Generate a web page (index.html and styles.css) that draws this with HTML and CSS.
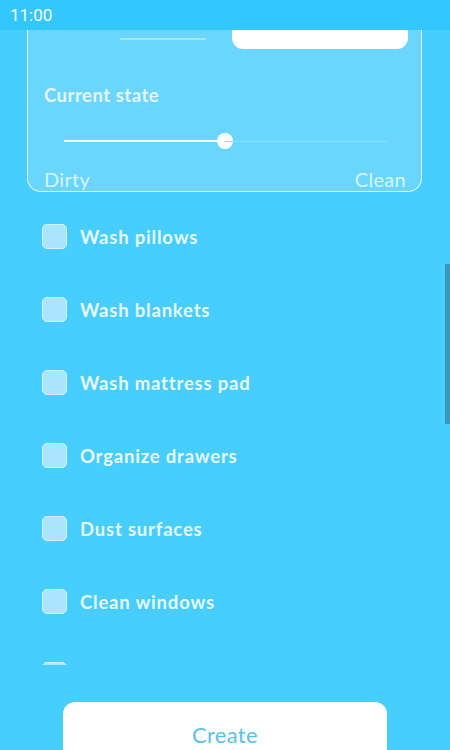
FILE: index.html
```html
<!DOCTYPE html>
<html>
<head>
    <title>Room checklist</title>
    <link rel="stylesheet" href="styles.css">
</head>
<body>
    <div class="status-bar">11:00</div>

    <div class="card">
        <div class="card-top">
            <div class="name-line"></div>
            <div class="white-box"></div>
        </div>
        <div class="state-title">Current state</div>
        <div class="slider">
            <div class="track-fill"></div>
            <div class="thumb"></div>
            <div class="track-rest"></div>
        </div>
        <div class="slider-labels">
            <span>Dirty</span>
            <span>Clean</span>
        </div>
    </div>

    <div class="task-list">
        <div class="task"><span class="box"></span>Wash pillows</div>
        <div class="task"><span class="box"></span>Wash blankets</div>
        <div class="task"><span class="box"></span>Wash mattress pad</div>
        <div class="task"><span class="box"></span>Organize drawers</div>
        <div class="task"><span class="box"></span>Dust surfaces</div>
        <div class="task"><span class="box"></span>Clean windows</div>
        <div class="task"><span class="box"></span></div>
    </div>

    <div class="footer">
        <button class="create">Create</button>
    </div>

    <div class="scrollbar"></div>
</body>
</html>
```

FILE: styles.css
```css
body {
    margin: 0;
    height: 750px;
    overflow: hidden;
    background-color: #47cdfe;
    font-family: Lato, "Open Sans", sans-serif;
    color: #e8f8ff;
}
.status-bar {
    position: absolute;
    top: 0;
    left: 0;
    right: 0;
    height: 30px;
    padding-left: 10px;
    background-color: #33c7fd;
    color: #ffffff;
    font-family: Roboto, sans-serif;
    font-size: 17px;
    line-height: 30px;
    z-index: 2;
}
.card {
    margin: 0 28px 0 27px;
    height: 192px;
    box-sizing: border-box;
    border: 1.5px solid #e6f8ff;
    border-top: none;
    border-radius: 0 0 14px 14px;
    background-color: #6bd6fd;
    display: flex;
    flex-direction: column;
}
.card-top {
    display: flex;
    align-items: flex-end;
    height: 50px;
}
.name-line {
    width: 86px;
    height: 2px;
    margin: 0 26px 9px 92px;
    background-color: #a4e6fd;
}
.white-box {
    width: 176px;
    height: 40px;
    background-color: #ffffff;
    border-radius: 0 0 11px 11px;
}
.state-title {
    margin: 35px 0 0 16px;
    font-size: 18.5px;
    font-weight: bold;
    letter-spacing: 0.5px;
    color: #e4f7ff;
}
.slider {
    position: relative;
    display: flex;
    align-items: center;
    height: 16px;
    margin: 27px 33px 0 36px;
}
.track-fill {
    width: 161px;
    height: 2px;
    background-color: #ffffff;
}
.thumb {
    width: 16px;
    height: 16px;
    margin-left: -8px;
    border-radius: 50%;
    background-color: #ffffff;
}
.track-rest {
    flex: 1;
    height: 1px;
    margin-left: -8px;
    background-color: #86dffd;
}
.slider-labels {
    display: flex;
    justify-content: space-between;
    margin: 18px 15px 0 16px;
    font-size: 20px;
    line-height: 24px;
    letter-spacing: 0.3px;
    color: #d6f4ff;
}
.task-list {
    height: 473px;
    overflow: hidden;
    padding-left: 42px;
}
.task {
    display: flex;
    align-items: center;
    height: 73px;
    font-size: 18.5px;
    font-weight: bold;
    letter-spacing: 0.8px;
    color: #e8f9ff;
}
.task:first-child {
    margin-top: 8px;
}
.box {
    width: 25px;
    height: 25px;
    box-sizing: border-box;
    margin-right: 13px;
    border: 1.5px solid #d4f3fe;
    border-radius: 5px;
    background-color: #a9e6fd;
}
.footer {
    display: flex;
    justify-content: center;
    padding-top: 37px;
}
.create {
    width: 324px;
    height: 64px;
    border: none;
    border-radius: 12px;
    background-color: #ffffff;
    color: #5cc0e2;
    font-family: Lato, sans-serif;
    font-size: 22px;
    letter-spacing: 0.3px;
    padding-bottom: 0;
}
.scrollbar {
    position: absolute;
    top: 264px;
    right: 0;
    width: 5px;
    height: 160px;
    background-color: #3a98ba;
}
```
